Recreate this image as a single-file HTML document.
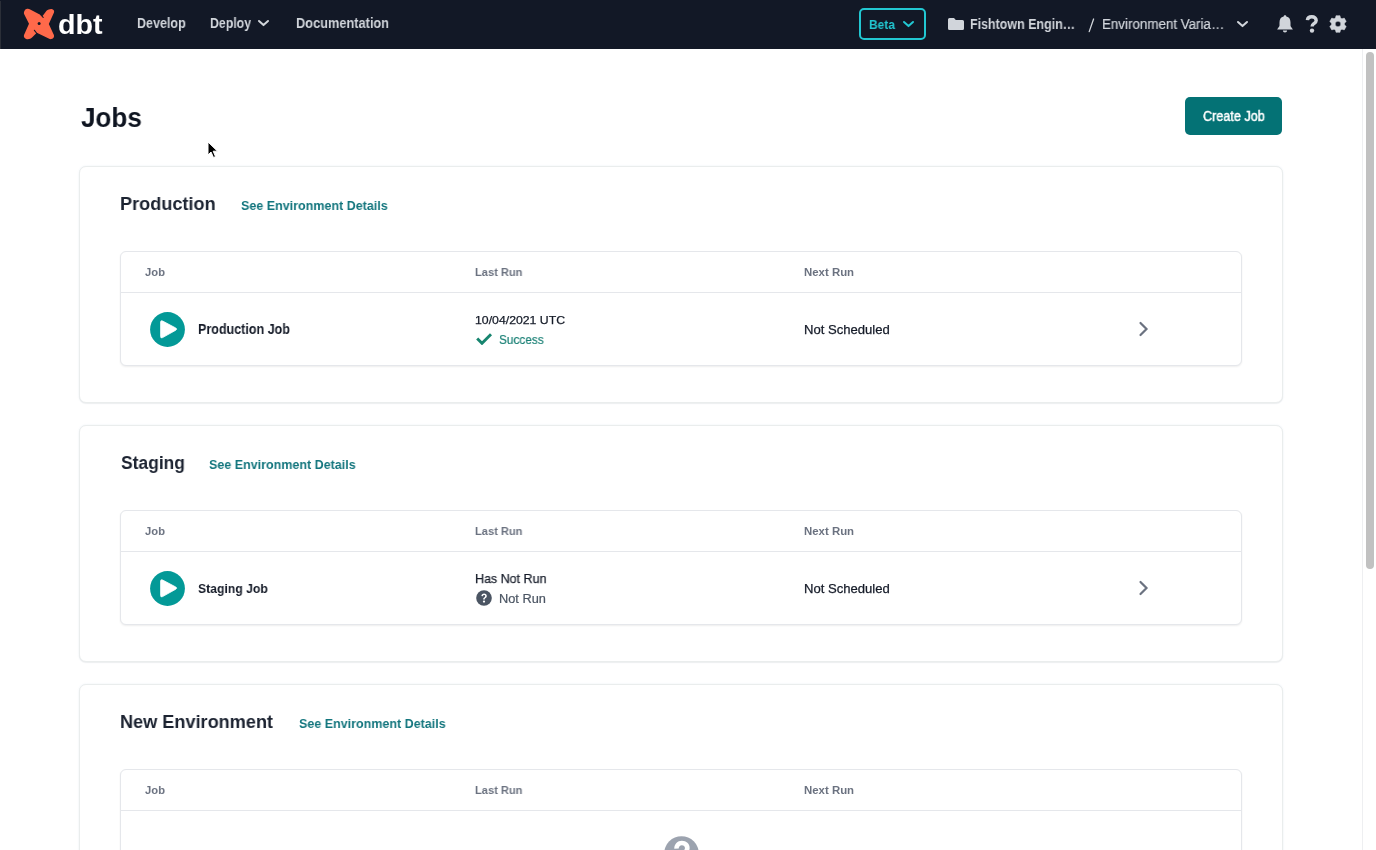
<!DOCTYPE html>
<html><head><meta charset="utf-8"><style>
html,body{margin:0;padding:0;}
body{width:1376px;height:850px;overflow:hidden;position:relative;background:#fff;font-family:"Liberation Sans", sans-serif;}
.t{position:absolute;white-space:nowrap;transform-origin:0 0;will-change:transform;font-family:"Liberation Sans", sans-serif;}
#hdr{position:absolute;left:0;top:0;width:1376px;height:49px;background:#121826;}
.card{position:absolute;left:79px;width:1204px;height:237px;box-sizing:border-box;border:1px solid #eaeded;border-radius:7px;background:#fff;box-shadow:0 0 2px rgba(90,130,180,0.12),0 1px 1px rgba(0,0,0,0.05);}
.tbl{position:absolute;left:120px;width:1122px;box-sizing:border-box;border:1px solid #e5e7eb;border-radius:6px;background:#fff;box-shadow:0 1px 2px rgba(0,0,0,0.07);}
</style></head><body>
<div id="hdr"><div style="position:absolute;left:0;top:1px;width:1px;height:48px;background:#2b2f38"></div><svg style="position:absolute;left:23px;top:8px" width="33" height="33" viewBox="0 0 33 33">
<path fill="#FF694A" d="M1.2,6.2 C0.4,4.6 1.6,1.4 3.4,1.0 C4.8,0.7 6.2,0.9 7.2,1.4 L19.6,8.0 L23.5,2.8 C25,1.6 27,0.8 28.6,1.0 C30.6,1.2 31.6,2.8 31.0,4.6 L25.8,16.0 L30.9,26.9 C31.5,28.6 30.6,30.6 28.4,31.1 C27.6,31.3 26.8,31.2 26.2,30.8 L13.8,24.8 L9.0,29.6 C7.6,31 5.6,31.6 3.8,31.2 C1.4,30.6 0.4,28.8 1.0,27 L6.0,15.8 Z"/>
<path fill="none" stroke="#121826" stroke-width="1.1" stroke-linecap="round" d="M17.6,6.7 L20.2,9.3 M11.4,22.3 L13.9,25.5"/>
<circle cx="16.1" cy="15.5" r="1.5" fill="#121826"/>
</svg><svg style="position:absolute;left:257px;top:19px" width="13" height="9" viewBox="0 0 13 9"><path d="M2,2 L6.5,6.1 L11,2" fill="none" stroke="#d1d5db" stroke-width="2" stroke-linecap="round" stroke-linejoin="round"/></svg><div style="position:absolute;left:859px;top:8px;width:67px;height:32px;box-sizing:border-box;border:2px solid #22c7d2;border-radius:5px"></div><svg style="position:absolute;left:902px;top:20px" width="13" height="9" viewBox="0 0 13 9"><path d="M2,2 L6.5,6.1 L11,2" fill="none" stroke="#22c7d2" stroke-width="2" stroke-linecap="round" stroke-linejoin="round"/></svg><svg style="position:absolute;left:948px;top:18px" width="16" height="12" viewBox="0 0 16 12"><path d="M1.5,0 H6 L7.8,2 H14.5 A1.5,1.5 0 0 1 16,3.5 V10.5 A1.5,1.5 0 0 1 14.5,12 H1.5 A1.5,1.5 0 0 1 0,10.5 V1.5 A1.5,1.5 0 0 1 1.5,0 Z" fill="#d1d5db"/></svg><svg style="position:absolute;left:1236px;top:20px" width="13" height="9" viewBox="0 0 13 9"><path d="M2,2 L6.5,6.1 L11,2" fill="none" stroke="#d1d5db" stroke-width="2" stroke-linecap="round" stroke-linejoin="round"/></svg><svg style="position:absolute;left:1277px;top:15px" width="16" height="18" viewBox="0 0 16 18"><path d="M8,0.3 C8.8,0.3 9.3,0.8 9.3,1.6 C12.4,2.2 13.5,4.6 13.5,7.6 V10.6 C13.5,11.6 14.4,12.6 15.9,14.4 H0.1 C1.6,12.6 2.5,11.6 2.5,10.6 V7.6 C2.5,4.6 3.6,2.2 6.7,1.6 C6.7,0.8 7.2,0.3 8,0.3 Z M5.9,15.6 H10.1 C10.1,16.8 9.2,17.6 8,17.6 C6.8,17.6 5.9,16.8 5.9,15.6 Z" fill="#d1d5db"/></svg><svg style="position:absolute;left:1305px;top:15px" width="14" height="18" viewBox="0 0 14 18"><path d="M2.4,5.2 C2.6,2.9 4.4,1.7 6.8,1.7 C9.4,1.7 11.2,3.3 11.2,5.4 C11.2,7.2 10,7.9 8.8,8.7 C7.6,9.5 7.1,10 7.1,11.6" fill="none" stroke="#d1d5db" stroke-width="3.4" stroke-linecap="butt"/><circle cx="7" cy="15.6" r="2.2" fill="#d1d5db"/></svg><svg style="position:absolute;left:1328px;top:14px" width="20" height="20" viewBox="0 0 20 20"><path d="M7.47,4.01 L8.00,1.64 L12.00,1.64 L12.53,4.01 A6.5,6.5 0 0 1 13.92,4.81 L13.92,4.81 L16.24,4.08 L18.24,7.55 L16.45,9.20 A6.5,6.5 0 0 1 16.45,10.80 L16.45,10.80 L18.24,12.45 L16.24,15.92 L13.92,15.19 A6.5,6.5 0 0 1 12.53,15.99 L12.53,15.99 L12.00,18.36 L8.00,18.36 L7.47,15.99 A6.5,6.5 0 0 1 6.08,15.19 L6.08,15.19 L3.76,15.92 L1.76,12.45 L3.55,10.80 A6.5,6.5 0 0 1 3.55,9.20 L3.55,9.20 L1.76,7.55 L3.76,4.08 L6.08,4.81 A6.5,6.5 0 0 1 7.47,4.01 Z M10,7.2 A2.8,2.8 0 1 0 10,12.8 A2.8,2.8 0 1 0 10,7.2 Z" fill="#d1d5db" fill-rule="evenodd" stroke="#d1d5db" stroke-width="0.5" stroke-linejoin="round"/></svg><svg style="position:absolute;left:1087px;top:18px" width="8" height="15" viewBox="0 0 8 15"><path d="M6.6,1 L2.2,13.6" stroke="#d1d5db" stroke-width="1.3" stroke-linecap="round"/></svg></div><svg style="position:absolute;left:207px;top:141px" width="12" height="18" viewBox="0 0 12 18"><path d="M1,1 L1,14 L4,11 L6.5,16.5 L8.5,15.6 L6.2,10.2 L10.5,10.2 Z" fill="#000" stroke="#fff" stroke-width="1"/></svg><div style="position:absolute;left:1185px;top:97px;width:97px;height:38px;border-radius:5px;background:#047275"></div><div class="card" style="top:166px"></div><div class="tbl" style="top:251px;height:115px"></div><div style="position:absolute;left:121px;top:292px;width:1120px;height:1px;background:#e5e7eb"></div><div class="card" style="top:425px"></div><div class="tbl" style="top:510px;height:115px"></div><div style="position:absolute;left:121px;top:551px;width:1120px;height:1px;background:#e5e7eb"></div><div class="card" style="top:684px"></div><div class="tbl" style="top:769px;height:200px"></div><div style="position:absolute;left:121px;top:810px;width:1120px;height:1px;background:#e5e7eb"></div><svg style="position:absolute;left:150px;top:311.5px" width="35" height="35" viewBox="0 0 35 35"><circle cx="17.5" cy="17.5" r="17.4" fill="#039997"/><path d="M10.6,10.2 Q10.6,8 12.6,9 L25.8,16 Q27.6,17.1 25.8,18.2 L12.6,25.6 Q10.6,26.6 10.6,24.4 Z" fill="#fff" stroke="#fff" stroke-width="0.8" stroke-linejoin="round"/></svg><svg style="position:absolute;left:1137.5px;top:321.3px" width="11" height="16" viewBox="0 0 11 16"><path d="M2.5,2 L8.5,8 L2.5,14" fill="none" stroke="#6b7280" stroke-width="2.2" stroke-linecap="round" stroke-linejoin="miter"/></svg><svg style="position:absolute;left:150px;top:570.5px" width="35" height="35" viewBox="0 0 35 35"><circle cx="17.5" cy="17.5" r="17.4" fill="#039997"/><path d="M10.6,10.2 Q10.6,8 12.6,9 L25.8,16 Q27.6,17.1 25.8,18.2 L12.6,25.6 Q10.6,26.6 10.6,24.4 Z" fill="#fff" stroke="#fff" stroke-width="0.8" stroke-linejoin="round"/></svg><svg style="position:absolute;left:1137.5px;top:580.3px" width="11" height="16" viewBox="0 0 11 16"><path d="M2.5,2 L8.5,8 L2.5,14" fill="none" stroke="#6b7280" stroke-width="2.2" stroke-linecap="round" stroke-linejoin="miter"/></svg><svg style="position:absolute;left:476px;top:333px" width="17" height="12" viewBox="0 0 17 12"><path d="M1.2,5.4 L6.0,10.3 L15.0,1.3" fill="none" stroke="#17856f" stroke-width="2.9" stroke-linecap="butt" stroke-linejoin="miter"/></svg><svg style="position:absolute;left:476px;top:590px" width="16" height="16" viewBox="0 0 16 16"><circle cx="8" cy="8" r="7.8" fill="#4b5563"/><path d="M5.4,6.1 C5.4,4.6 6.6,3.6 8.1,3.6 C9.7,3.6 10.8,4.6 10.8,6 C10.8,7.2 10,7.8 9.2,8.3 C8.8,8.6 8.8,8.8 8.8,9.4 H7.2 C7.2,8.4 7.4,7.9 8.2,7.4 C8.9,7 9.2,6.7 9.2,6.1 C9.2,5.5 8.8,5.1 8.1,5.1 C7.4,5.1 7,5.6 7,6.3 Z" fill="#fff"/><circle cx="8" cy="11.6" r="1.1" fill="#fff"/></svg><svg style="position:absolute;left:664px;top:835.5px" width="35" height="35" viewBox="0 0 35 35"><circle cx="17.5" cy="17.5" r="17.3" fill="#9ca3af"/><g transform="translate(17.6,15) scale(1.2) translate(-17.6,-15)"><path d="M11.5,13.2 C11.5,9.2 14.2,6.5 17.8,6.5 C21.6,6.5 24.3,9 24.3,12.4 C24.3,15.2 22.4,16.6 20.6,17.7 C19.8,18.2 19.6,18.8 19.6,20 H15.8 C15.8,17.6 16.4,16.4 18.2,15.3 C19.6,14.5 20.4,13.9 20.4,12.6 C20.4,11.2 19.3,10.2 17.8,10.2 C16.3,10.2 15.2,11.3 15.2,13 Z" fill="#fff"/><circle cx="17.6" cy="24.6" r="2.3" fill="#fff"/></g></svg><div style="position:absolute;left:1362px;top:49px;width:1px;height:801px;background:#eeeff1"></div><div style="position:absolute;left:1366px;top:52px;width:8px;height:517px;border-radius:4px;background:#c1c1c1"></div>
<div class="t" style="left:137.10px;top:15.90px;font-size:14px;line-height:14px;font-weight:700;color:#d1d5db;transform:scaleX(0.8941);">Develop</div><div class="t" style="left:210.40px;top:15.90px;font-size:14px;line-height:14px;font-weight:700;color:#d1d5db;transform:scaleX(0.8787);">Deploy</div><div class="t" style="left:295.60px;top:15.90px;font-size:14px;line-height:14px;font-weight:700;color:#d1d5db;transform:scaleX(0.9128);">Documentation</div><div class="t" style="left:869.40px;top:18.75px;font-size:12.5px;line-height:12.5px;font-weight:700;color:#22c7d2;transform:scaleX(0.9541);">Beta</div><div class="t" style="left:969.90px;top:17.80px;font-size:13.75px;line-height:13.75px;font-weight:700;color:#d1d5db;transform:scaleX(0.9060);">Fishtown Engin&hellip;</div><div class="t" style="left:1101.80px;top:16.80px;font-size:14px;line-height:14px;font-weight:400;color:#d1d5db;transform:scaleX(0.9542);-webkit-text-stroke:0.2px #d1d5db">Environment Varia&hellip;</div><div class="t" style="left:57.94px;top:12.00px;font-size:27px;line-height:27px;font-weight:700;color:#ffffff;transform:scaleX(1.0614);">dbt</div><div class="t" style="left:80.60px;top:102.90px;font-size:28.5px;line-height:28.5px;font-weight:700;color:#0f1521;transform:scaleX(0.9137);">Jobs</div><div class="t" style="left:1202.70px;top:109.00px;font-size:14px;line-height:14px;font-weight:400;color:#ffffff;transform:scaleX(0.9011);-webkit-text-stroke:0.45px #ffffff">Create Job</div><div class="t" style="left:120.03px;top:195.00px;font-size:18.75px;line-height:18.75px;font-weight:700;color:#1c2331;transform:scaleX(0.9667);">Production</div><div class="t" style="left:240.60px;top:199.00px;font-size:13.5px;line-height:13.5px;font-weight:700;color:#12757d;transform:scaleX(0.9272);">See Environment Details</div><div class="t" style="left:145.30px;top:266.90px;font-size:11.25px;line-height:11.25px;font-weight:700;color:#6b7280;transform:scaleX(0.9936);">Job</div><div class="t" style="left:475.00px;top:266.90px;font-size:11.25px;line-height:11.25px;font-weight:700;color:#6b7280;transform:scaleX(0.9844);">Last Run</div><div class="t" style="left:804.00px;top:266.90px;font-size:11.25px;line-height:11.25px;font-weight:700;color:#6b7280;transform:scaleX(1.0140);">Next Run</div><div class="t" style="left:121.00px;top:454.00px;font-size:18.75px;line-height:18.75px;font-weight:700;color:#1c2331;transform:scaleX(0.9298);">Staging</div><div class="t" style="left:209.25px;top:458.00px;font-size:13.5px;line-height:13.5px;font-weight:700;color:#12757d;transform:scaleX(0.9268);">See Environment Details</div><div class="t" style="left:145.30px;top:525.90px;font-size:11.25px;line-height:11.25px;font-weight:700;color:#6b7280;transform:scaleX(0.9936);">Job</div><div class="t" style="left:475.00px;top:525.90px;font-size:11.25px;line-height:11.25px;font-weight:700;color:#6b7280;transform:scaleX(0.9844);">Last Run</div><div class="t" style="left:804.00px;top:525.90px;font-size:11.25px;line-height:11.25px;font-weight:700;color:#6b7280;transform:scaleX(1.0140);">Next Run</div><div class="t" style="left:120.03px;top:713.00px;font-size:18.75px;line-height:18.75px;font-weight:700;color:#1c2331;transform:scaleX(0.9661);">New Environment</div><div class="t" style="left:298.75px;top:717.00px;font-size:13.5px;line-height:13.5px;font-weight:700;color:#12757d;transform:scaleX(0.9268);">See Environment Details</div><div class="t" style="left:145.30px;top:784.90px;font-size:11.25px;line-height:11.25px;font-weight:700;color:#6b7280;transform:scaleX(0.9936);">Job</div><div class="t" style="left:475.00px;top:784.90px;font-size:11.25px;line-height:11.25px;font-weight:700;color:#6b7280;transform:scaleX(0.9844);">Last Run</div><div class="t" style="left:804.00px;top:784.90px;font-size:11.25px;line-height:11.25px;font-weight:700;color:#6b7280;transform:scaleX(1.0140);">Next Run</div><div class="t" style="left:198.10px;top:323.00px;font-size:13.75px;line-height:13.75px;font-weight:700;color:#151b28;transform:scaleX(0.9111);">Production Job</div><div class="t" style="left:475.40px;top:313.75px;font-size:11.75px;line-height:11.75px;font-weight:400;color:#151b28;transform:scaleX(1.0446);-webkit-text-stroke:0.25px #151b28">10/04/2021 UTC</div><div class="t" style="left:499.00px;top:332.50px;font-size:13.25px;line-height:13.25px;font-weight:400;color:#1b8176;transform:scaleX(0.8920);-webkit-text-stroke:0.2px #1b8176">Success</div><div class="t" style="left:804.29px;top:322.75px;font-size:13px;line-height:13px;font-weight:400;color:#151b28;transform:scaleX(1.0065);-webkit-text-stroke:0.25px #151b28">Not Scheduled</div><div class="t" style="left:198.10px;top:581.90px;font-size:13.5px;line-height:13.5px;font-weight:700;color:#151b28;transform:scaleX(0.9039);">Staging Job</div><div class="t" style="left:475.24px;top:571.70px;font-size:13px;line-height:13px;font-weight:400;color:#151b28;transform:scaleX(0.9605);-webkit-text-stroke:0.25px #151b28">Has Not Run</div><div class="t" style="left:499.08px;top:592.60px;font-size:12.5px;line-height:12.5px;font-weight:400;color:#4b5563;transform:scaleX(1.0222);-webkit-text-stroke:0.2px #4b5563">Not Run</div><div class="t" style="left:804.29px;top:581.75px;font-size:13px;line-height:13px;font-weight:400;color:#151b28;transform:scaleX(1.0065);-webkit-text-stroke:0.25px #151b28">Not Scheduled</div>
</body></html>
